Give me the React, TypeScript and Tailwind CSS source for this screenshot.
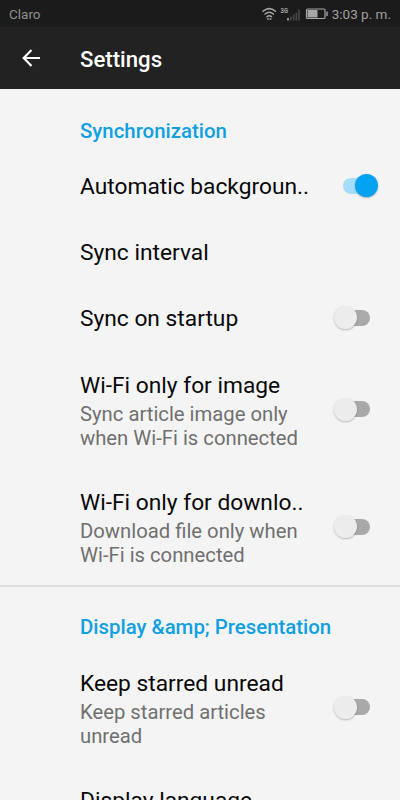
import React, { useState } from "react";

const StatusBar = () => (
  <div className="flex h-[27px] shrink-0 items-center bg-[#1b1b1b] pl-[9px] pr-[9px] pt-px text-[13.5px] text-[#8e8e8e]">
    <span>Claro</span>
    <svg className="mb-px ml-auto" width="84" height="20" viewBox="0 0 84 20" fill="none">
      {/* wifi */}
      <g stroke="#a5a5a5" strokeWidth="1.5" strokeLinecap="round">
        <path d="M18 7.300c4-3.400 8.500-3.400 12.500 0" />
        <path d="M20 10c2.700-2.300 5.800-2.300 8.500 0" />
        <path d="M22 12.700c1.500-1.200 3-1.200 4.500 0" />
      </g>
      <circle cx="23" cy="15" r="0.900" fill="#a5a5a5" />
      <circle cx="25.500" cy="15" r="0.900" fill="#a5a5a5" />
      {/* mobile signal */}
      <text x="35.500" y="8.500" fontSize="7" fontWeight="700" fill="#a5a5a5" textLength="7.500" lengthAdjust="spacingAndGlyphs">3G</text>
      <path d="M43 14v2.500" stroke="#a5a5a5" strokeWidth="1.700" />
      <path d="M46 12.500v4M48.700 10.500v6M51.300 8.500v8M54 5.500v11" stroke="#484848" strokeWidth="1.600" />
      {/* battery */}
      <rect x="61.500" y="5" width="18.500" height="9.500" rx="1" stroke="#a5a5a5" strokeWidth="1.200" />
      <rect x="62.500" y="6" width="10" height="7.500" fill="#a5a5a5" />
      <path d="M82 7.500v4.500" stroke="#a5a5a5" strokeWidth="1.400" />
    </svg>
    <span className="ml-[3px] text-[#a0a0a0]">3:03 p. m.</span>
  </div>
);

const Switch = ({ on, onClick }: { on: boolean; onClick: () => void }) => (
  <button
    role="switch"
    aria-checked={on}
    onClick={onClick}
    className={`flex h-[23px] w-9 shrink-0 items-center ${on ? "mr-px justify-end" : "mr-[9px]"}`}
  >
    <span className={`h-4 w-[27px] shrink-0 rounded-full ${on ? "-mr-[15px] bg-[#a5dcf8]" : "order-2 -ml-[14px] bg-[#a9a9a9]"}`} />
    <span
      className={`z-10 size-[23px] shrink-0 rounded-full shadow-[0_1px_2px_rgba(0,0,0,0.25)] ${on ? "bg-[#03a3f2]" : "bg-[#ececec]"}`}
    />
  </button>
);

interface RowProps {
  title: string;
  summary?: string;
  toggle?: boolean;
  initial?: boolean;
}

const SettingRow = ({ title, summary, toggle, initial = false }: RowProps) => {
  const [on, setOn] = useState(initial);

  return (
    <div className={`flex shrink-0 items-center pl-20 pr-[21px] ${summary ? "h-[117.5px]" : "h-[66px]"}`}>
      <div className="w-[235px] pt-[3px]">
        <p className="whitespace-nowrap text-[22.75px] leading-7 text-[#080808]">{title}</p>
        {summary && <p className="mt-0.5 w-[225px] text-[20.25px] leading-[24px] text-[#707070]">{summary}</p>}
      </div>
      {toggle && (
        <div className="ml-auto">
          <Switch on={on} onClick={() => setOn(!on)} />
        </div>
      )}
    </div>
  );
};

const SectionTitle = ({ children }: { children: React.ReactNode }) => (
  <h2 className="pl-20 text-[20.4px] font-medium leading-6 text-[#0fa0e2]">{children}</h2>
);

const App = () => {
  return (
    <div className="flex h-screen flex-col overflow-hidden bg-[#f4f4f4] font-[Roboto,sans-serif]">
      <StatusBar />
      <header className="flex h-[62px] shrink-0 items-center bg-[#222] text-white">
        <svg className="ml-[22px]" width="19" height="18" viewBox="0 0 19 18" fill="none" stroke="white" strokeWidth="2.200">
          <path d="M18 9H2M9.500 1L1.700 9l7.800 8" />
        </svg>
        <h1 className="ml-[39px] pt-[3px] text-[22.2px] font-medium">Settings</h1>
      </header>

      <section className="shrink-0 pt-[30px]">
        <SectionTitle>Synchronization</SectionTitle>
        <div className="mt-[9.5px]">
          <SettingRow title="Automatic backgroun.." toggle initial />
          <SettingRow title="Sync interval" />
          <SettingRow title="Sync on startup" toggle />
          <SettingRow title="Wi-Fi only for image" summary="Sync article image only when Wi-Fi is connected" toggle />
          <SettingRow title="Wi-Fi only for downlo.." summary="Download file only when Wi-Fi is connected" toggle />
        </div>
      </section>

      <section className="-mt-[0.5px] shrink-0 border-t-2 border-[#dfdfdf] pt-7">
        <SectionTitle>Display &amp;amp; Presentation</SectionTitle>
        <div className="mt-[9.5px]">
          <SettingRow title="Keep starred unread" summary="Keep starred articles unread" toggle />
          <SettingRow title="Display language" />
        </div>
      </section>
    </div>
  );
};

export default App;
